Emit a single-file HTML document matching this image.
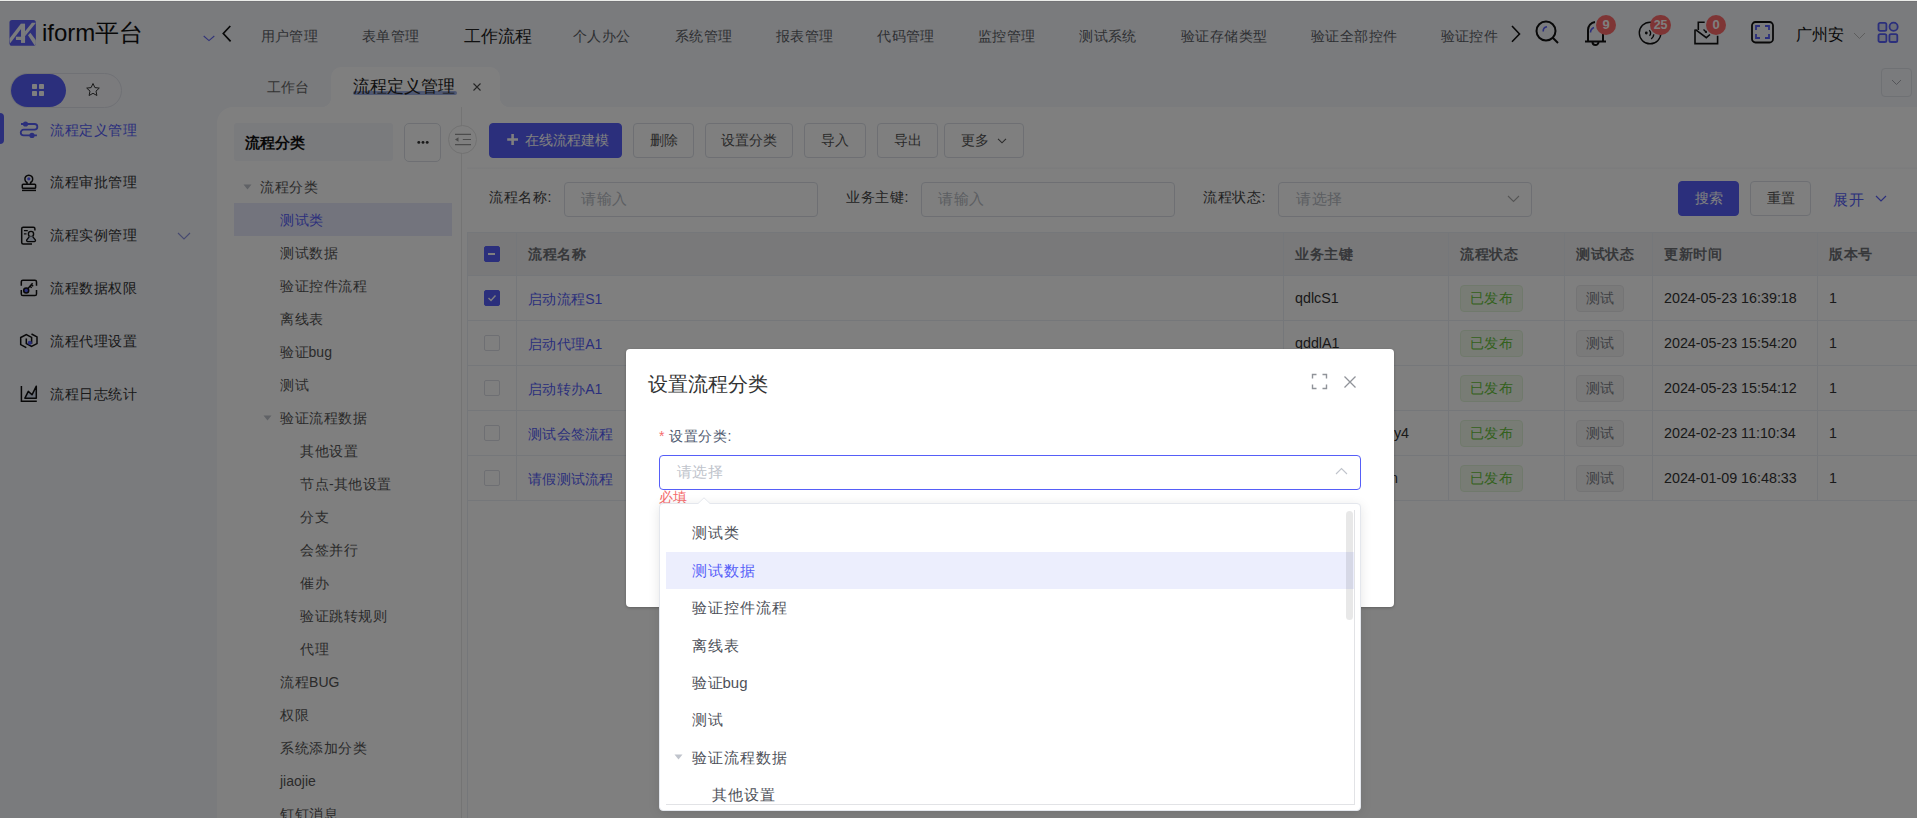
<!DOCTYPE html>
<html><head><meta charset="utf-8">
<style>
*{box-sizing:border-box;margin:0;padding:0}
html,body{width:1917px;height:818px;overflow:hidden}
body{font-family:"Liberation Sans",sans-serif;background:#f4f6fb;color:#333;font-size:14px;position:relative}
.a{position:absolute;white-space:nowrap}
.t{position:absolute;white-space:nowrap;line-height:1;transform:translateY(-50%)}
#panel{position:absolute;left:217px;top:107px;width:1700px;height:711px;background:#fff;border-top-left-radius:16px}
.btn{position:absolute;height:34px;border:1px solid #dcdfe6;border-radius:4px;background:#fff;font-size:14px;color:#555;display:flex;align-items:center;justify-content:center}
.inp{position:absolute;height:35px;border:1px solid #dcdfe6;border-radius:4px;background:#fff}
.ph{color:#b8bcc4}
.nav{color:#5c5f66;font-size:14px;letter-spacing:0.4px}
.menu{font-size:14px;color:#333;letter-spacing:0.55px}
.tree{font-size:14px;color:#555;letter-spacing:0.55px}
.th{font-weight:bold;color:#6e7075;font-size:14px;letter-spacing:0.5px}
.td{font-size:14.3px;color:#333}
.lnk{color:#565ef8;font-size:14px;letter-spacing:0.3px}
.tag{position:absolute;height:24px;border-radius:4px;font-size:14px;letter-spacing:0.4px;display:flex;align-items:center;justify-content:center}
.pub{background:#f0f9eb;border:1px solid #e1f3d8;color:#67c23a}
.tst{background:#f4f4f5;border:1px solid #e9e9eb;color:#7d8087}
.cb{position:absolute;width:14px;height:14px;border:1px solid #dcdfe6;border-radius:2px;background:#fff}
#overlay{position:absolute;left:0;top:0;width:1917px;height:818px;background:rgba(0,0,0,.5)}
</style></head><body>

<!-- HEADER -->
<div class="a" style="left:0;top:0;width:1917px;height:1px;background:#ebece9;z-index:50"></div>
<svg class="a" style="left:8px;top:18px" width="30" height="30" viewBox="0 0 818 818"><defs><clipPath id="lc"><rect x="40" y="55" width="720" height="705" rx="70"/></clipPath></defs><rect x="40" y="55" width="720" height="705" rx="70" fill="#5a5ef6"/><g clip-path="url(#lc)" fill="#f4f6fb"><polygon points="30,570 350,160 465,160 60,690"/><rect x="355" y="160" width="110" height="520"/><rect x="215" y="510" width="250" height="90"/><polygon points="465,361 652,130 764,130 465,500"/><polygon points="545,470 610,400 900,790 800,860"/></g></svg>
<div class="t" style="left:42px;top:33px;font-size:24px;color:#111">iform平台</div>
<svg class="a" style="left:203px;top:35px" width="12" height="7" viewBox="0 0 12 7"><path d="M0.7 1 L6 5.6 L11.3 1" fill="none" stroke="#6266f0" stroke-width="1.1"/></svg>
<svg class="a" style="left:222px;top:25px" width="10" height="17" viewBox="0 0 10 17"><path d="M8.3 1 L1.3 8.5 L8.6 16.3" fill="none" stroke="#111" stroke-width="1.7"/></svg>
<div class="t nav" style="left:260.5px;top:36px">用户管理</div>
<div class="t nav" style="left:361.9px;top:36px">表单管理</div>
<div class="t" style="left:464px;top:37px;font-size:16.7px;color:#222">工作流程</div>
<div class="t nav" style="left:573px;top:36px">个人办公</div>
<div class="t nav" style="left:674.8px;top:36px">系统管理</div>
<div class="t nav" style="left:776px;top:36px">报表管理</div>
<div class="t nav" style="left:877.3px;top:36px">代码管理</div>
<div class="t nav" style="left:978px;top:36px">监控管理</div>
<div class="t nav" style="left:1079.3px;top:36px">测试系统</div>
<div class="t nav" style="left:1181px;top:36px">验证存储类型</div>
<div class="t nav" style="left:1311px;top:36px">验证全部控件</div>
<div class="t nav" style="left:1440.5px;top:36px">验证控件</div>
<svg class="a" style="left:1510px;top:25px" width="12" height="18" viewBox="0 0 12 18"><path d="M2 1 L9.5 9 L2 16.8" fill="none" stroke="#111" stroke-width="1.6"/></svg>
<!-- search -->
<svg class="a" style="left:1534px;top:19px" width="28" height="28" viewBox="0 0 28 28"><circle cx="12" cy="12" r="9.5" fill="none" stroke="#111" stroke-width="2"/><path d="M18.5 18.5 L24 24" stroke="#111" stroke-width="2"/><path d="M9.2 12.5 A4.5 4.5 0 0 1 13 7.8" fill="none" stroke="#565ef8" stroke-width="1.6"/></svg>
<!-- bell -->
<svg class="a" style="left:1583px;top:19px" width="26" height="28" viewBox="0 0 26 28"><path d="M5 22 V11 A8 8 0 0 1 12 3 " fill="none" stroke="#111" stroke-width="2"/><path d="M20 22 V14" fill="none" stroke="#111" stroke-width="2"/><path d="M2 22.5 H23" stroke="#111" stroke-width="2"/><path d="M9.5 23 A3 3 0 0 0 15.5 23" fill="none" stroke="#111" stroke-width="2"/><path d="M7.5 13.5 A5.5 5.5 0 0 1 11 8.5" fill="none" stroke="#565ef8" stroke-width="1.6"/></svg>
<div class="a" style="left:1596px;top:15px;width:20px;height:20px;border-radius:10px;background:#fd6a6a;color:#fff;font-size:13px;font-weight:bold;line-height:20px;text-align:center">9</div>
<!-- disc -->
<svg class="a" style="left:1636px;top:20px" width="28" height="28" viewBox="0 0 28 28"><circle cx="14.1" cy="13" r="10.8" fill="none" stroke="#111" stroke-width="1.4"/><circle cx="10.3" cy="13" r="1.4" fill="#111"/><path d="M13.2 10.3 A3.6 3.6 0 0 1 13.5 15.8" fill="none" stroke="#111" stroke-width="1.4"/><path d="M17.8 14.4 A6 6 0 0 1 15.2 18.9" fill="none" stroke="#111" stroke-width="1.4"/></svg>
<div class="a" style="left:1650px;top:15px;width:21px;height:20px;border-radius:10px;background:#fd6a6a;color:#fff;font-size:12.5px;font-weight:bold;line-height:20px;text-align:center;letter-spacing:-0.3px">25</div>
<!-- mail -->
<svg class="a" style="left:1692px;top:19px" width="28" height="28" viewBox="0 0 28 28"><path d="M6.3 11 V3.3 H12.7" fill="none" stroke="#111" stroke-width="1.6"/><path d="M3 10.5 V24.6 H25.6 V16.8" fill="none" stroke="#111" stroke-width="1.6"/><path d="M3.5 10.6 L14.3 18.7 L18 15.5" fill="none" stroke="#111" stroke-width="1.6"/><path d="M11.5 10.5 L14.3 13.3" fill="none" stroke="#111" stroke-width="1.3"/><path d="M15 14 L12.6 13.6 L14.6 11.6Z" fill="#111"/></svg>
<div class="a" style="left:1706px;top:15px;width:20px;height:20px;border-radius:10px;background:#fd6a6a;color:#fff;font-size:13px;font-weight:bold;line-height:20px;text-align:center">0</div>
<!-- fullscreen -->
<svg class="a" style="left:1750px;top:20px" width="25" height="24" viewBox="0 0 25 24"><rect x="2" y="2" width="21" height="20.5" rx="3.5" fill="none" stroke="#111" stroke-width="1.8"/><path d="M6 10 V6 H10 M15 6 H19 V10 M19 14 V18 H15 M10 18 H6 V14" fill="none" stroke="#565ef8" stroke-width="1.8"/></svg>
<div class="t" style="left:1796px;top:34.5px;font-size:15.6px;color:#111">广州安</div>
<svg class="a" style="left:1853px;top:32px" width="13" height="8" viewBox="0 0 13 8"><path d="M1 1 L6.5 6.5 L12 1" fill="none" stroke="#bbb" stroke-width="1"/></svg>
<svg class="a" style="left:1876px;top:21px" width="24" height="24" viewBox="0 0 24 24"><rect x="2.5" y="1.9" width="7.9" height="7.9" rx="1.6" fill="#d8dcf0" stroke="#565ef8" stroke-width="1.8"/><circle cx="17.6" cy="5.7" r="4.1" fill="#d8dcf0" stroke="#565ef8" stroke-width="1.8"/><rect x="2.5" y="13.1" width="7.9" height="7.9" rx="1.6" fill="#d8dcf0" stroke="#565ef8" stroke-width="1.8"/><rect x="13.4" y="13.1" width="7.9" height="7.9" rx="1.6" fill="#d8dcf0" stroke="#565ef8" stroke-width="1.8"/></svg>

<!-- SIDEBAR -->
<div class="a" style="left:10px;top:73px;width:112px;height:35px;border-radius:17.5px;border:1px solid #e0e2ea;background:#f6f7fb"></div>
<div class="a" style="left:11px;top:74px;width:55px;height:33px;border-radius:16.5px;background:#565ef8"></div>
<svg class="a" style="left:31px;top:83px" width="14" height="14" viewBox="0 0 14 14"><rect x="1" y="1" width="5" height="5" rx="0.8" fill="#fff"/><rect x="8" y="1" width="5" height="5" rx="0.8" fill="#fff"/><rect x="1" y="8" width="5" height="5" rx="0.8" fill="#fff"/><rect x="8" y="8" width="5" height="5" rx="0.8" fill="#fff"/></svg>
<svg class="a" style="left:85px;top:82px" width="16" height="16" viewBox="0 0 16 16"><path d="M8 1.5 L9.9 5.6 L14.3 6.1 L11 9.1 L11.9 13.5 L8 11.3 L4.1 13.5 L5 9.1 L1.7 6.1 L6.1 5.6 Z" fill="none" stroke="#333" stroke-width="1" stroke-linejoin="round"/></svg>
<div class="a" style="left:0;top:113px;width:4px;height:31px;background:#565ef8;border-radius:0 4px 4px 0"></div>
<svg class="a" style="left:14px;top:115px" width="30" height="30" viewBox="0 0 30 30"><path d="M7 9 H20.5 A2.85 2.85 0 0 1 20.5 14.7 H9.6 A2.85 2.85 0 0 0 9.6 20.4 H22.9" fill="none" stroke="#565ef8" stroke-width="1.8"/><circle cx="11.5" cy="9" r="2.6" fill="#565ef8"/><circle cx="18" cy="20.4" r="2.6" fill="#565ef8"/></svg>
<div class="t menu" style="left:50px;top:130px;color:#565ef8">流程定义管理</div>
<svg class="a" style="left:14px;top:166px" width="30" height="30" viewBox="0 0 30 30"><path d="M13 18 L13 16.5 A3.9 3.9 0 1 1 16.6 16.5 L16.6 18" fill="none" stroke="#111" stroke-width="1.5"/><rect x="8.3" y="18.2" width="13.3" height="4" rx="0.8" fill="none" stroke="#111" stroke-width="1.5"/><path d="M8 24.4 H22" stroke="#111" stroke-width="1.5"/><circle cx="14.8" cy="12.8" r="1.6" fill="#565ef8"/></svg>
<div class="t menu" style="left:50px;top:182px">流程审批管理</div>
<svg class="a" style="left:14px;top:220px" width="30" height="30" viewBox="0 0 30 30"><path d="M18 24 H9.2 A1.5 1.5 0 0 1 7.7 22.5 V8.7 A1.5 1.5 0 0 1 9.2 7.2 H19.4 A1.5 1.5 0 0 1 20.9 8.7 V10.6" fill="none" stroke="#111" stroke-width="1.5"/><path d="M9.9 10.6 H13.8 M9.9 13.9 H12.5" stroke="#111" stroke-width="1.4"/><circle cx="17" cy="14" r="2.6" fill="none" stroke="#111" stroke-width="1.4"/><path d="M15.3 16.6 L12.8 19.8 A1.2 1.2 0 0 0 13.8 21.6 H20.3 A1.2 1.2 0 0 0 21.3 19.8 L18.7 16.6" fill="#d2dcef" stroke="#111" stroke-width="1.4"/></svg>
<div class="t menu" style="left:50px;top:235px">流程实例管理</div>
<svg class="a" style="left:177px;top:232px" width="14" height="8" viewBox="0 0 14 8"><path d="M1 1 L7 7 L13 1" fill="none" stroke="#8f95e0" stroke-width="1.1"/></svg>
<svg class="a" style="left:14px;top:273px" width="30" height="30" viewBox="0 0 30 30"><path d="M7.3 12.8 V8.8 A1.6 1.6 0 0 1 8.9 7.2 H20.9 A1.6 1.6 0 0 1 22.5 8.8 V12.8 M22.5 17 V21 A1.6 1.6 0 0 1 20.9 22.6 H8.9 A1.6 1.6 0 0 1 7.3 21 V17" fill="none" stroke="#111" stroke-width="1.5"/><circle cx="12.2" cy="17.5" r="2.5" fill="#565ef8" stroke="#111" stroke-width="1.5"/><path d="M14 15.6 L18.6 10.3 M16.2 13.1 L17.6 14.9 M17.4 11.7 L19.2 13.3" stroke="#111" stroke-width="1.5"/></svg>
<div class="t menu" style="left:50px;top:288px">流程数据权限</div>
<svg class="a" style="left:14px;top:326px" width="30" height="30" viewBox="0 0 30 30"><path d="M12.3 21.7 L6.7 18.6 V11.5 L12.3 8.6 L17.6 11.4 V17.2 L17.3 17.3" fill="none" stroke="#111" stroke-width="1.5"/><path d="M17.5 8 L23 10.9 V17.6 L17.5 20.4 L12.3 17.6 V12.4" fill="none" stroke="#111" stroke-width="1.5"/><circle cx="15.8" cy="16.8" r="2.1" fill="#565ef8"/></svg>
<div class="t menu" style="left:50px;top:341px">流程代理设置</div>
<svg class="a" style="left:14px;top:379px" width="30" height="30" viewBox="0 0 30 30"><path d="M7.4 7 V22.3 H22.8" fill="none" stroke="#111" stroke-width="1.5"/><path d="M10.9 19.2 L14.3 12.4 L18 15.8 L22.3 7.2 V19.2 Z" fill="#d2dcef" stroke="#111" stroke-width="1.5" stroke-linejoin="round"/></svg>
<div class="t menu" style="left:50px;top:394px">流程日志统计</div>
<!-- TABS -->
<div class="t" style="left:267px;top:87px;font-size:14px;color:#666">工作台</div>
<div class="a" style="left:331px;top:67px;width:169px;height:41px;background:#fff;border-radius:10px 10px 0 0"></div>
<div class="a" style="left:321px;top:97px;width:10px;height:10px;background:radial-gradient(circle at 0 0,transparent 10px,#fff 10.5px)"></div>
<div class="a" style="left:500px;top:97px;width:10px;height:10px;background:radial-gradient(circle at 100% 0,transparent 10px,#fff 10.5px)"></div>
<div class="a" style="left:353px;top:91px;width:104px;height:3.5px;background:#9fb0e4;border-radius:2px"></div>
<div class="t" style="left:353px;top:86px;font-size:16.5px;color:#222">流程定义管理</div>
<svg class="a" style="left:472px;top:82px" width="10" height="10" viewBox="0 0 10 10"><path d="M1.5 1.5 L8.5 8.5 M8.5 1.5 L1.5 8.5" stroke="#4a4a4a" stroke-width="1.1"/></svg>
<div class="a" style="left:1881px;top:68px;width:31px;height:29px;border:1px solid #dfe2e8;border-radius:4px;background:#f4f6fb"></div>
<svg class="a" style="left:1891px;top:79px" width="11" height="7" viewBox="0 0 11 7"><path d="M1 1 L5.5 5.5 L10 1" fill="none" stroke="#a8abb2" stroke-width="1"/></svg>
<div id="panel"></div>

<!-- PANEL CONTENT -->
<div class="a" style="left:234px;top:123px;width:159px;height:38px;background:#f4f6fb;border-radius:3px"></div>
<div class="t" style="left:245px;top:142px;font-size:15px;font-weight:bold;color:#111">流程分类</div>
<div class="a" style="left:404px;top:123px;width:37px;height:39px;border:1px solid #dcdfe6;border-radius:5px;background:#fff"></div>
<svg class="a" style="left:414px;top:140px" width="16" height="5" viewBox="0 0 16 5"><circle cx="4.8" cy="2.4" r="1.45" fill="#333"/><circle cx="9" cy="2.4" r="1.45" fill="#333"/><circle cx="13.2" cy="2.4" r="1.45" fill="#333"/></svg>
<div class="a" style="left:461px;top:107px;width:1px;height:711px;background:#e8e8e8"></div>
<div class="a" style="left:448px;top:125px;width:29px;height:29px;border-radius:50%;border:1px solid #e3e3e3;background:#fff"></div>
<svg class="a" style="left:453px;top:132px" width="20" height="15" viewBox="0 0 20 15"><path d="M2 2.4 H18 M9.8 7.5 H18 M2 12.6 H18" stroke="#999" stroke-width="1.1"/><path d="M2 7.5 L5.5 5.3 L5.5 9.7 Z" fill="#999"/></svg>
<svg class="a" style="left:243px;top:184px" width="9" height="6" viewBox="0 0 9 6"><path d="M0.5 0.5 H8.5 L4.5 5.5Z" fill="#c0c4cc"/></svg>
<div class="t tree" style="left:260px;top:187px">流程分类</div>
<div class="a" style="left:234px;top:203px;width:218px;height:33px;background:#e6e8fb"></div>
<div class="t tree" style="left:280px;top:220px;color:#565ef8">测试类</div>
<div class="t tree" style="left:280px;top:253px">测试数据</div>
<div class="t tree" style="left:280px;top:286px">验证控件流程</div>
<div class="t tree" style="left:280px;top:319px">离线表</div>
<div class="t tree" style="left:280px;top:352px">验<span style="letter-spacing:0">证bug</span></div>
<div class="t tree" style="left:280px;top:385px">测试</div>
<svg class="a" style="left:263px;top:415px" width="9" height="6" viewBox="0 0 9 6"><path d="M0.5 0.5 H8.5 L4.5 5.5Z" fill="#c0c4cc"/></svg>
<div class="t tree" style="left:280px;top:418px">验证流程数据</div>
<div class="t tree" style="left:300px;top:451px">其他设置</div>
<div class="t tree" style="left:300px;top:484px">节点<span style="letter-spacing:0">-</span>其他设置</div>
<div class="t tree" style="left:300px;top:517px">分支</div>
<div class="t tree" style="left:300px;top:550px">会签并行</div>
<div class="t tree" style="left:300px;top:583px">催办</div>
<div class="t tree" style="left:300px;top:616px">验证跳转规则</div>
<div class="t tree" style="left:300px;top:649px">代理</div>
<div class="t tree" style="left:280px;top:682px">流程<span style="letter-spacing:0">BUG</span></div>
<div class="t tree" style="left:280px;top:715px">权限</div>
<div class="t tree" style="left:280px;top:748px">系统添加分类</div>
<div class="t tree" style="left:280px;top:781px"><span style="letter-spacing:0">jiaojie</span></div>
<div class="t tree" style="left:280px;top:814px">钉钉消息</div>
<div class="btn" style="left:489px;top:123px;width:133px;height:35px;background:#565ef8;border-color:#565ef8"></div><svg class="a" style="left:506px;top:133px" width="13" height="13" viewBox="0 0 13 13"><path d="M6.6 1 V12 M1.2 6.5 H12" stroke="#fff" stroke-width="2.6"/></svg><div class="t" style="left:524.5px;top:140px;font-size:14px;color:#fff;letter-spacing:0.2px">在线流程建模</div>
<div class="btn" style="left:633px;top:123px;width:61px;height:35px">删除</div>
<div class="btn" style="left:705px;top:123px;width:88px;height:35px">设置分类</div>
<div class="btn" style="left:804px;top:123px;width:62px;height:35px">导入</div>
<div class="btn" style="left:877px;top:123px;width:61px;height:35px">导出</div>
<div class="btn" style="left:944px;top:123px;width:80px;height:35px">更多<svg style="margin-left:8px" width="10" height="6" viewBox="0 0 10 6"><path d="M1 0.8 L5 4.8 L9 0.8" fill="none" stroke="#555" stroke-width="1.1"/></svg></div>
<div class="a" style="left:467px;top:167px;width:1450px;height:2px;background:linear-gradient(#fcfcfd,#f6f7f8)"></div>
<div class="t td" style="left:489px;top:197px;color:#444;font-size:14px;letter-spacing:0.6px">流程名称:</div>
<div class="inp" style="left:564px;top:182px;width:254px"></div><div class="t ph" style="left:581px;top:198px;font-size:15px;letter-spacing:0.5px">请输入</div>
<div class="t td" style="left:846px;top:197px;color:#444;font-size:14px;letter-spacing:0.6px">业务主键:</div>
<div class="inp" style="left:921px;top:182px;width:254px"></div><div class="t ph" style="left:938px;top:198px;font-size:15px;letter-spacing:0.5px">请输入</div>
<div class="t td" style="left:1203px;top:197px;color:#444;font-size:14px;letter-spacing:0.6px">流程状态:</div>
<div class="inp" style="left:1278px;top:182px;width:254px"></div><div class="t ph" style="left:1296px;top:198px;font-size:15px;letter-spacing:0.5px">请选择</div>
<svg class="a" style="left:1507px;top:195px" width="13" height="8" viewBox="0 0 13 8"><path d="M1 1 L6.5 6.5 L12 1" fill="none" stroke="#aaa" stroke-width="1.1"/></svg>
<div class="btn" style="left:1678px;top:181px;width:61px;height:35px;background:#565ef8;border-color:#565ef8;color:#fff">搜索</div>
<div class="btn" style="left:1750px;top:181px;width:61px;height:35px">重置</div>
<div class="t" style="left:1833px;top:199px;font-size:15px;letter-spacing:0.6px;color:#565ef8">展开</div>
<svg class="a" style="left:1875px;top:195px" width="12" height="8" viewBox="0 0 12 8"><path d="M1 1 L6 6 L11 1" fill="none" stroke="#565ef8" stroke-width="1.2"/></svg>
<div class="a" style="left:468px;top:232px;width:1449px;height:43px;background:#f2f3f5;border-top:1px solid #ebeef5"></div>
<div class="a" style="left:516px;top:232px;width:1px;height:268px;background:#ebeef5"></div>
<div class="a" style="left:1283px;top:232px;width:1px;height:268px;background:#ebeef5"></div>
<div class="a" style="left:1448px;top:232px;width:1px;height:268px;background:#ebeef5"></div>
<div class="a" style="left:1564px;top:232px;width:1px;height:268px;background:#ebeef5"></div>
<div class="a" style="left:1652px;top:232px;width:1px;height:268px;background:#ebeef5"></div>
<div class="a" style="left:1817px;top:232px;width:1px;height:268px;background:#ebeef5"></div>
<div class="a" style="left:467px;top:232px;width:1px;height:586px;background:#ebeef5"></div>
<div class="a" style="left:468px;top:275px;width:1449px;height:1px;background:#ebeef5"></div>
<div class="a" style="left:468px;top:320px;width:1449px;height:1px;background:#ebeef5"></div>
<div class="a" style="left:468px;top:365px;width:1449px;height:1px;background:#ebeef5"></div>
<div class="a" style="left:468px;top:410px;width:1449px;height:1px;background:#ebeef5"></div>
<div class="a" style="left:468px;top:455px;width:1449px;height:1px;background:#ebeef5"></div>
<div class="a" style="left:468px;top:500px;width:1449px;height:1px;background:#ebeef5"></div>
<div class="t th" style="left:528px;top:254px">流程名称</div>
<div class="t th" style="left:1295px;top:254px">业务主键</div>
<div class="t th" style="left:1460px;top:254px">流程状态</div>
<div class="t th" style="left:1576px;top:254px">测试状态</div>
<div class="t th" style="left:1664px;top:254px">更新时间</div>
<div class="t th" style="left:1829px;top:254px">版本号</div>
<div class="cb" style="left:484px;top:246px;width:16px;height:16px;background:#565ef8;border-color:#565ef8"><div style="position:absolute;left:3px;top:6.3px;width:7px;height:1.7px;background:#fff"></div></div>
<div class="cb" style="left:484px;top:290px;width:16px;height:16px;background:#565ef8;border-color:#565ef8"><svg style="position:absolute;left:2px;top:2px" width="10" height="10" viewBox="0 0 10 10"><path d="M1.5 5 L4 7.5 L8.5 2.5" fill="none" stroke="#fff" stroke-width="1.4"/></svg></div>
<div class="t lnk" style="left:528px;top:298.5px">启动流程<span style="letter-spacing:0">S1</span></div>
<div class="t td" style="left:1295px;top:298px">qdlcS1</div>
<div class="tag pub" style="left:1460px;top:285px;width:63px;height:27px">已发布</div>
<div class="tag tst" style="left:1576px;top:285px;width:48px;height:27px">测试</div>
<div class="t td" style="left:1664px;top:298px">2024-05-23 16:39:18</div>
<div class="t td" style="left:1829px;top:298px">1</div>
<div class="cb" style="left:484px;top:335px;width:16px;height:16px"></div>
<div class="t lnk" style="left:528px;top:343.5px">启动代理<span style="letter-spacing:0">A1</span></div>
<div class="t td" style="left:1295px;top:343px">qddlA1</div>
<div class="tag pub" style="left:1460px;top:330px;width:63px;height:27px">已发布</div>
<div class="tag tst" style="left:1576px;top:330px;width:48px;height:27px">测试</div>
<div class="t td" style="left:1664px;top:343px">2024-05-23 15:54:20</div>
<div class="t td" style="left:1829px;top:343px">1</div>
<div class="cb" style="left:484px;top:380px;width:16px;height:16px"></div>
<div class="t lnk" style="left:528px;top:388.5px">启动转办<span style="letter-spacing:0">A1</span></div>
<div class="tag pub" style="left:1460px;top:375px;width:63px;height:27px">已发布</div>
<div class="tag tst" style="left:1576px;top:375px;width:48px;height:27px">测试</div>
<div class="t td" style="left:1664px;top:388px">2024-05-23 15:54:12</div>
<div class="t td" style="left:1829px;top:388px">1</div>
<div class="cb" style="left:484px;top:425px;width:16px;height:16px"></div>
<div class="t lnk" style="left:528px;top:433.5px">测试会签流程</div>
<div class="t td" style="right:508px;top:433px">hqlcy4</div>
<div class="tag pub" style="left:1460px;top:420px;width:63px;height:27px">已发布</div>
<div class="tag tst" style="left:1576px;top:420px;width:48px;height:27px">测试</div>
<div class="t td" style="left:1664px;top:433px">2024-02-23 11:10:34</div>
<div class="t td" style="left:1829px;top:433px">1</div>
<div class="cb" style="left:484px;top:470px;width:16px;height:16px"></div>
<div class="t lnk" style="left:528px;top:478.5px">请假测试流程</div>
<div class="t td" style="right:519px;top:478px">qjlcn</div>
<div class="tag pub" style="left:1460px;top:465px;width:63px;height:27px">已发布</div>
<div class="tag tst" style="left:1576px;top:465px;width:48px;height:27px">测试</div>
<div class="t td" style="left:1664px;top:478px">2024-01-09 16:48:33</div>
<div class="t td" style="left:1829px;top:478px">1</div>
<div id="overlay"></div>
<div class="a" style="left:0;top:0;width:1917px;height:1px;background:#ebece9"></div><div class="a" style="left:0;top:1px;width:1917px;height:1px;background:#737376"></div>

<!-- MODAL -->
<div class="a" style="left:626px;top:349px;width:768px;height:258px;background:#fff;border-radius:4px;box-shadow:0 1px 3px rgba(0,0,0,.25)"></div>
<div class="t" style="left:648px;top:384px;font-size:20px;color:#333">设置流程分类</div>
<svg class="a" style="left:1311px;top:373px" width="17" height="17" viewBox="0 0 17 17"><path d="M1.5 5.5 V1.5 H5.5 M11.5 1.5 H15.5 V5.5 M15.5 11.5 V15.5 H11.5 M5.5 15.5 H1.5 V11.5" fill="none" stroke="#909399" stroke-width="1.4"/></svg>
<svg class="a" style="left:1343px;top:375px" width="14" height="14" viewBox="0 0 14 14"><path d="M1.5 1.5 L12.5 12.5 M12.5 1.5 L1.5 12.5" stroke="#909399" stroke-width="1.3"/></svg>
<div class="t" style="left:659px;top:435.5px;font-size:14px;color:#f56c6c">*</div>
<div class="t" style="left:669px;top:436px;font-size:14px;color:#4f5a70;letter-spacing:0.6px">设置分类:</div>
<div class="a" style="left:659px;top:455px;width:702px;height:35px;border:1px solid #565ef8;border-radius:4px;background:#fff"></div>
<div class="t" style="left:676.5px;top:471px;font-size:15px;color:#c0c4cc;letter-spacing:0.6px">请选择</div>
<svg class="a" style="left:1335px;top:467px" width="13" height="8" viewBox="0 0 13 8"><path d="M1 7 L6.5 1.5 L12 7" fill="none" stroke="#c0c4cc" stroke-width="1.1"/></svg>
<div class="t" style="left:658.5px;top:497.5px;font-size:13.5px;color:#f56c6c;letter-spacing:0.3px">必填</div>
<!-- DROPDOWN -->
<div class="a" style="left:659px;top:503px;width:702px;height:308px;background:#fff;border:1px solid #e4e7ed;border-radius:4px;box-shadow:0 2px 12px rgba(0,0,0,.1)"></div>
<svg class="a" style="left:697px;top:497px" width="14" height="8" viewBox="0 0 14 8"><path d="M0 7.5 L7 0.8 L14 7.5" fill="#fff" stroke="#e4e7ed" stroke-width="1"/><rect x="0" y="7" width="14" height="2" fill="#fff"/></svg>
<div class="a" style="left:666px;top:510px;width:689px;height:295px;border:1px solid #e2e3e6;border-top:none;border-left:none"></div>
<div class="a" style="left:666px;top:552px;width:688px;height:37px;background:#eceefd"></div>
<div class="a" style="left:1346px;top:511px;width:7px;height:109px;background:rgba(0,0,0,0.09);border-radius:3.5px"></div>
<div class="t" style="left:691.5px;top:532.3px;font-size:15px;letter-spacing:1px;color:#4e5159">测试类</div>
<div class="t" style="left:691.5px;top:570.3px;font-size:15px;letter-spacing:1px;color:#565ef8">测试数据</div>
<div class="t" style="left:691.5px;top:607.3px;font-size:15px;letter-spacing:1px;color:#4e5159">验证控件流程</div>
<div class="t" style="left:691.5px;top:645.3px;font-size:15px;letter-spacing:1px;color:#4e5159">离线表</div>
<div class="t" style="left:691.5px;top:682.3px;font-size:15px;letter-spacing:1px;color:#4e5159">验<span style="letter-spacing:0">证bug</span></div>
<div class="t" style="left:691.5px;top:719.3px;font-size:15px;letter-spacing:1px;color:#4e5159">测试</div>
<div class="t" style="left:691.5px;top:757.3px;font-size:15px;letter-spacing:1px;color:#4e5159">验证流程数据</div>
<div class="t" style="left:711.5px;top:794.3px;font-size:15px;letter-spacing:1px;color:#4e5159">其他设置</div>
<svg class="a" style="left:674px;top:754px" width="9" height="6" viewBox="0 0 9 6"><path d="M0.5 0.5 H8.5 L4.5 5.5Z" fill="#c0c4cc"/></svg>
</body></html>
